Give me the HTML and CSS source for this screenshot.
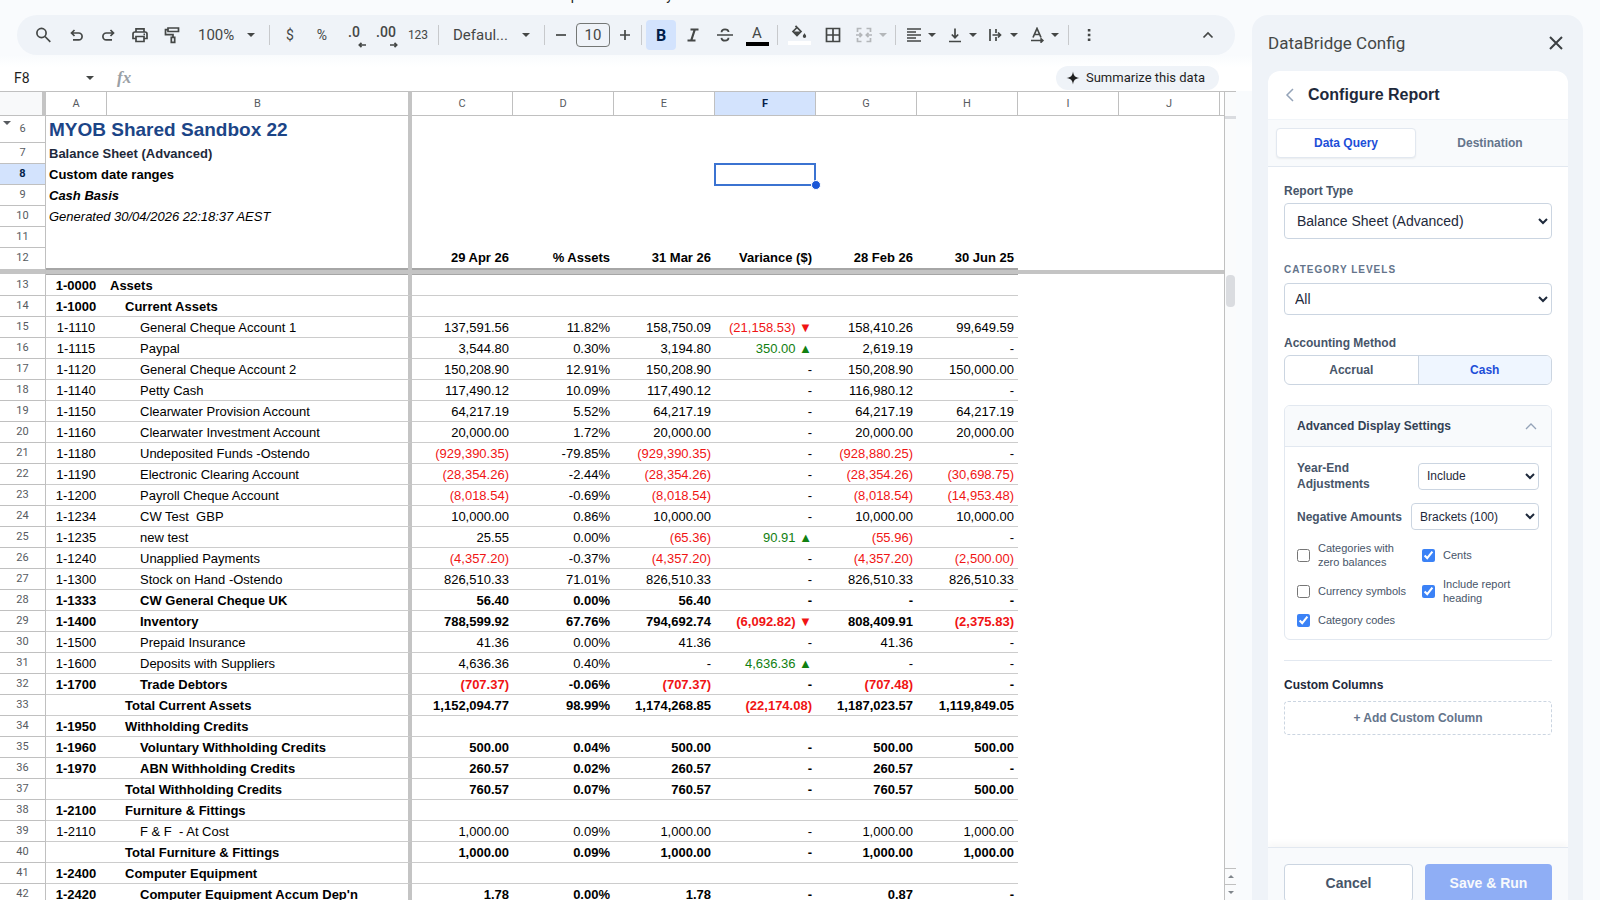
FILE: index.html
```html
<!DOCTYPE html>
<html lang="en">
<head>
    <meta charset="UTF-8">
    <meta name="viewport" content="width=device-width, initial-scale=1.0">
    <title>Balance Sheet - DataBridge</title>
    <link rel="stylesheet" href="styles.css">
</head>
<body>
<div class="main">
    <!-- Menu -->
    <nav class="menu">
        <span>File</span><span>Edit</span><span>View</span><span>Insert</span><span>Format</span><span>Data</span><span>Tools</span><span>Gemini</span><span>Extensions</span><span>Help</span><span>Accessibility</span>
    </nav>

    <!-- Toolbar -->
    <div class="toolbar">
        <button class="tool" aria-label="Search"><svg width="18" height="18" viewBox="0 0 18 18"><circle cx="6.500" cy="7" r="4.600"/><path d="M10 10.500l5.300 5.300"/></svg></button>
        <button class="tool" aria-label="Undo"><svg width="18" height="18" viewBox="0 0 18 18"><path d="M7.500 4L4.500 7l3 3M4.500 7h7.200a3.400 3.400 0 0 1 0 6.800H6"/></svg></button>
        <button class="tool" aria-label="Redo"><svg width="18" height="18" viewBox="0 0 18 18"><path d="M11.500 4l3 3-3 3M14.500 7H7.300a3.400 3.400 0 0 0 0 6.800H13"/></svg></button>
        <button class="tool" aria-label="Print"><svg width="18" height="18" viewBox="0 0 18 18"><path d="M5 6V2.800h8V6M5 12.500H2V8a2 2 0 0 1 2-2h10a2 2 0 0 1 2 2v4.500h-3M5 10.500h8v5H5z"/><path d="M12.500 8.300h1.500"/></svg></button>
        <button class="tool" aria-label="Paint format"><svg width="18" height="18" viewBox="0 0 18 18"><path d="M5 2h10.500v3.500H5zM5 3.700H2.500v5H10v2.500M8.300 11.300h3.400v5H8.300z"/></svg></button>
        <button class="tool-text zoom">100%<i class="caret"></i></button>
        <span class="sep"></span>
        <button class="tool">$</button>
        <button class="tool">%</button>
        <button class="tool decimal">.0<svg width="8" height="6" viewBox="0 0 8 6"><path d="M8 3H1.500M3.500 .8L1.300 3l2.200 2.200"/></svg></button>
        <button class="tool decimal">.00<svg width="8" height="6" viewBox="0 0 8 6"><path d="M0 3h6.500M4.500 .8L6.700 3 4.500 5.200"/></svg></button>
        <button class="tool small">123</button>
        <span class="sep"></span>
        <button class="tool-text font">Defaul...<i class="caret"></i></button>
        <span class="sep"></span>
        <button class="tool narrow" aria-label="Decrease font size"><svg width="12" height="12" viewBox="0 0 12 12"><path d="M1 6h10"/></svg></button>
        <input class="font-size" type="text" value="10" aria-label="Font size">
        <button class="tool narrow" aria-label="Increase font size"><svg width="12" height="12" viewBox="0 0 12 12"><path d="M1 6h10M6 1v10"/></svg></button>
        <span class="sep"></span>
        <button class="tool bold">B</button>
        <button class="tool" aria-label="Italic"><svg width="18" height="18" viewBox="0 0 18 18"><path d="M6.500 3.500h8M3.500 14.500h8M10.800 3.500L7.200 14.500" stroke-width="2.200"/></svg></button>
        <button class="tool" aria-label="Strikethrough"><svg width="18" height="18" viewBox="0 0 18 18"><path d="M1 9h16M12.600 6C12.400 4.200 11 3.300 9 3.300S5.600 4.200 5.500 6.200M5.400 11.800c.2 1.900 1.600 2.900 3.600 2.900s3.500-1 3.500-2.900"/></svg></button>
        <button class="tool color-tool">A<i class="swatch black"></i></button>
        <span class="sep"></span>
        <button class="tool wide color-tool" aria-label="Fill color"><svg width="18" height="15" viewBox="0 0 18 15"><path d="M5.500 .8L11 6.500 7 10.500 3 6.500l4-4"/><path class="solid" d="M3 6.500h8L7 10.500zM14.500 8.300s1.700 2 1.700 3a1.700 1.700 0 0 1-3.400 0c0-1 1.700-3 1.700-3z"/></svg><i class="swatch white"></i></button>
        <button class="tool wide" aria-label="Borders"><svg width="18" height="18" viewBox="0 0 18 18"><path d="M2.500 2.500h13v13h-13zM9 2.500v13M2.500 9h13"/></svg></button>
        <button class="tool drop merge" aria-label="Merge cells"><svg width="18" height="18" viewBox="0 0 18 18"><path d="M6.500 2.500h-4v3.500M11.500 2.500h4v3.500M6.500 15.500h-4V12M11.500 15.500h4V12M1 9h5.500M4.500 6.800L6.700 9l-2.200 2.200M17 9h-5.500M13.500 6.800L11.300 9l2.200 2.200"/></svg><i class="caret"></i></button>
        <span class="sep"></span>
        <button class="tool drop" aria-label="Horizontal align"><svg width="16" height="16" viewBox="0 0 16 16"><path d="M1 2h14M1 5h9M1 8h14M1 11h9M1 14h14"/></svg><i class="caret"></i></button>
        <button class="tool drop" aria-label="Vertical align"><svg width="16" height="16" viewBox="0 0 16 16"><path d="M2 14.500h12M8 1.500v9M4.800 7.500L8 10.700l3.200-3.200"/></svg><i class="caret"></i></button>
        <button class="tool drop" aria-label="Text wrapping"><svg width="16" height="16" viewBox="0 0 16 16"><path d="M2 2v12M8 2v4M8 10v4M4.500 8h8M10 5.500L12.500 8 10 10.500"/></svg><i class="caret"></i></button>
        <button class="tool drop" aria-label="Text rotation"><svg width="16" height="16" viewBox="0 0 16 16"><path d="M4 10.500L8 1.500l4 9M5.500 7.500h5M2 13.500h12M11.500 11.300l2.300 2.200-2.300 2.200"/></svg><i class="caret"></i></button>
        <span class="sep"></span>
        <button class="tool" aria-label="More"><svg width="18" height="18" viewBox="0 0 18 18"><path class="solid" d="M7.800 3h2.600v2.600H7.800zM7.800 7.700h2.600v2.600H7.800zM7.800 12.400h2.600V15H7.800z"/></svg></button>
        <button class="tool collapse" aria-label="Hide the menus"><svg width="14" height="14" viewBox="0 0 14 14"><path d="M2.500 9.500L7 5l4.500 4.500"/></svg></button>
    </div>

    <!-- Formula bar -->
    <div class="formula-bar">
        <input class="name-box" type="text" value="F8" aria-label="Name box">
        <i class="caret"></i>
        <span class="fx">fx</span>
        <button class="summarize"><svg width="14" height="14" viewBox="0 0 14 14"><path d="M7 0.500C7.600 4.900 9.100 6.400 13.500 7 9.100 7.600 7.600 9.100 7 13.500 6.400 9.100 4.900 7.600.5 7 4.900 6.400 6.400 4.900 7 .5z"/></svg>Summarize this data</button>
    </div>

    <!-- Grid -->
    <div class="grid">
        <div class="sheet-wrap">
        <table class="sheet">
            <colgroup>
                <col class="c-head"><col class="c-a"><col class="c-b">
                <col class="c-n"><col class="c-n"><col class="c-n"><col class="c-n"><col class="c-n"><col class="c-n"><col class="c-n"><col class="c-n"><col>
            </colgroup>
            <thead>
                <tr><th class="corner"></th><th>A</th><th>B</th><th>C</th><th>D</th><th>E</th><th class="active">F</th><th>G</th><th>H</th><th>I</th><th>J</th><th></th></tr>
            </thead>
            <tbody class="frozen">
                <tr class="tall"><th><i class="caret group"></i>6</th><td class="title" colspan="2">MYOB Shared Sandbox 22</td><td></td><td></td><td></td><td></td><td></td><td></td></tr>
                <tr><th>7</th><td class="sub" colspan="2">Balance Sheet (Advanced)</td><td></td><td></td><td></td><td></td><td></td><td></td></tr>
                <tr><th class="active">8</th><td class="strong" colspan="2">Custom date ranges</td><td></td><td></td><td></td><td class="selected"><span class="cursor"></span></td><td></td><td></td></tr>
                <tr><th>9</th><td class="strong italic" colspan="2">Cash Basis</td><td></td><td></td><td></td><td></td><td></td><td></td></tr>
                <tr><th>10</th><td class="italic" colspan="2">Generated 30/04/2026 22:18:37 AEST</td><td></td><td></td><td></td><td></td><td></td><td></td></tr>
                <tr><th>11</th><td colspan="2"></td><td></td><td></td><td></td><td></td><td></td><td></td></tr>
                <tr class="headings"><th>12</th><td colspan="2"></td><td>29 Apr 26</td><td>% Assets</td><td>31 Mar 26</td><td>Variance ($)</td><td>28 Feb 26</td><td>30 Jun 25</td></tr>
                <tr class="freeze"><th></th><td class="edge" colspan="2"></td><td class="edge" colspan="6"></td><td colspan="3"></td></tr>
            </tbody>
            <tbody class="data">
                <tr class="b"><th>13</th><td>1-0000</td><td>Assets</td><td></td><td></td><td></td><td></td><td></td><td></td></tr>
                <tr class="b"><th>14</th><td>1-1000</td><td class="in1">Current Assets</td><td></td><td></td><td></td><td></td><td></td><td></td></tr>
                <tr><th>15</th><td>1-1110</td><td class="in2">General Cheque Account 1</td><td>137,591.56</td><td>11.82%</td><td>158,750.09</td><td class="neg">(21,158.53) ▼</td><td>158,410.26</td><td>99,649.59</td></tr>
                <tr><th>16</th><td>1-1115</td><td class="in2">Paypal</td><td>3,544.80</td><td>0.30%</td><td>3,194.80</td><td class="pos">350.00 ▲</td><td>2,619.19</td><td>-</td></tr>
                <tr><th>17</th><td>1-1120</td><td class="in2">General Cheque Account 2</td><td>150,208.90</td><td>12.91%</td><td>150,208.90</td><td>-</td><td>150,208.90</td><td>150,000.00</td></tr>
                <tr><th>18</th><td>1-1140</td><td class="in2">Petty Cash</td><td>117,490.12</td><td>10.09%</td><td>117,490.12</td><td>-</td><td>116,980.12</td><td>-</td></tr>
                <tr><th>19</th><td>1-1150</td><td class="in2">Clearwater Provision Account</td><td>64,217.19</td><td>5.52%</td><td>64,217.19</td><td>-</td><td>64,217.19</td><td>64,217.19</td></tr>
                <tr><th>20</th><td>1-1160</td><td class="in2">Clearwater Investment Account</td><td>20,000.00</td><td>1.72%</td><td>20,000.00</td><td>-</td><td>20,000.00</td><td>20,000.00</td></tr>
                <tr><th>21</th><td>1-1180</td><td class="in2">Undeposited Funds -Ostendo</td><td class="neg">(929,390.35)</td><td>-79.85%</td><td class="neg">(929,390.35)</td><td>-</td><td class="neg">(928,880.25)</td><td>-</td></tr>
                <tr><th>22</th><td>1-1190</td><td class="in2">Electronic Clearing Account</td><td class="neg">(28,354.26)</td><td>-2.44%</td><td class="neg">(28,354.26)</td><td>-</td><td class="neg">(28,354.26)</td><td class="neg">(30,698.75)</td></tr>
                <tr><th>23</th><td>1-1200</td><td class="in2">Payroll Cheque Account</td><td class="neg">(8,018.54)</td><td>-0.69%</td><td class="neg">(8,018.54)</td><td>-</td><td class="neg">(8,018.54)</td><td class="neg">(14,953.48)</td></tr>
                <tr><th>24</th><td>1-1234</td><td class="in2">CW Test&nbsp; GBP</td><td>10,000.00</td><td>0.86%</td><td>10,000.00</td><td>-</td><td>10,000.00</td><td>10,000.00</td></tr>
                <tr><th>25</th><td>1-1235</td><td class="in2">new test</td><td>25.55</td><td>0.00%</td><td class="neg">(65.36)</td><td class="pos">90.91 ▲</td><td class="neg">(55.96)</td><td>-</td></tr>
                <tr><th>26</th><td>1-1240</td><td class="in2">Unapplied Payments</td><td class="neg">(4,357.20)</td><td>-0.37%</td><td class="neg">(4,357.20)</td><td>-</td><td class="neg">(4,357.20)</td><td class="neg">(2,500.00)</td></tr>
                <tr><th>27</th><td>1-1300</td><td class="in2">Stock on Hand -Ostendo</td><td>826,510.33</td><td>71.01%</td><td>826,510.33</td><td>-</td><td>826,510.33</td><td>826,510.33</td></tr>
                <tr class="b"><th>28</th><td>1-1333</td><td class="in2">CW General Cheque UK</td><td>56.40</td><td>0.00%</td><td>56.40</td><td>-</td><td>-</td><td>-</td></tr>
                <tr class="b"><th>29</th><td>1-1400</td><td class="in2">Inventory</td><td>788,599.92</td><td>67.76%</td><td>794,692.74</td><td class="neg">(6,092.82) ▼</td><td>808,409.91</td><td class="neg">(2,375.83)</td></tr>
                <tr><th>30</th><td>1-1500</td><td class="in2">Prepaid Insurance</td><td>41.36</td><td>0.00%</td><td>41.36</td><td>-</td><td>41.36</td><td>-</td></tr>
                <tr><th>31</th><td>1-1600</td><td class="in2">Deposits with Suppliers</td><td>4,636.36</td><td>0.40%</td><td>-</td><td class="pos">4,636.36 ▲</td><td>-</td><td>-</td></tr>
                <tr class="b"><th>32</th><td>1-1700</td><td class="in2">Trade Debtors</td><td class="neg">(707.37)</td><td>-0.06%</td><td class="neg">(707.37)</td><td>-</td><td class="neg">(707.48)</td><td>-</td></tr>
                <tr class="b"><th>33</th><td></td><td class="in1">Total Current Assets</td><td>1,152,094.77</td><td>98.99%</td><td>1,174,268.85</td><td class="neg">(22,174.08)</td><td>1,187,023.57</td><td>1,119,849.05</td></tr>
                <tr class="b"><th>34</th><td>1-1950</td><td class="in1">Withholding Credits</td><td></td><td></td><td></td><td></td><td></td><td></td></tr>
                <tr class="b"><th>35</th><td>1-1960</td><td class="in2">Voluntary Withholding Credits</td><td>500.00</td><td>0.04%</td><td>500.00</td><td>-</td><td>500.00</td><td>500.00</td></tr>
                <tr class="b"><th>36</th><td>1-1970</td><td class="in2">ABN Withholding Credits</td><td>260.57</td><td>0.02%</td><td>260.57</td><td>-</td><td>260.57</td><td>-</td></tr>
                <tr class="b"><th>37</th><td></td><td class="in1">Total Withholding Credits</td><td>760.57</td><td>0.07%</td><td>760.57</td><td>-</td><td>760.57</td><td>500.00</td></tr>
                <tr class="b"><th>38</th><td>1-2100</td><td class="in1">Furniture &amp; Fittings</td><td></td><td></td><td></td><td></td><td></td><td></td></tr>
                <tr><th>39</th><td>1-2110</td><td class="in2">F &amp; F&nbsp; - At Cost</td><td>1,000.00</td><td>0.09%</td><td>1,000.00</td><td>-</td><td>1,000.00</td><td>1,000.00</td></tr>
                <tr class="b"><th>40</th><td></td><td class="in1">Total Furniture &amp; Fittings</td><td>1,000.00</td><td>0.09%</td><td>1,000.00</td><td>-</td><td>1,000.00</td><td>1,000.00</td></tr>
                <tr class="b"><th>41</th><td>1-2400</td><td class="in1">Computer Equipment</td><td></td><td></td><td></td><td></td><td></td><td></td></tr>
                <tr class="b"><th>42</th><td>1-2420</td><td class="in2">Computer Equipment Accum Dep'n</td><td>1.78</td><td>0.00%</td><td>1.78</td><td>-</td><td>0.87</td><td>-</td></tr>
            </tbody>
        </table>
        </div>
        <div class="scrollbar">
            <div class="scroll-head"></div>
            <div class="thumb"></div>
            <button class="arrow" aria-label="Scroll up"><i class="caret up"></i></button>
            <button class="arrow" aria-label="Scroll down"><i class="caret"></i></button>
        </div>
    </div>
</div>

<!-- Add-on side panel -->
<aside class="panel">
    <div class="panel-header">
        <span>DataBridge Config</span>
        <button class="close" aria-label="Close"><svg width="16" height="16" viewBox="0 0 16 16"><path d="M2 2l12 12M14 2L2 14"/></svg></button>
    </div>
    <div class="card">
        <div class="card-title">
            <button class="back" aria-label="Back"><svg width="10" height="16" viewBox="0 0 10 16"><path d="M9 2L3 8l6 6"/></svg></button>
            <h1>Configure Report</h1>
        </div>
        <div class="tabs">
            <button class="tab active">Data Query</button>
            <button class="tab">Destination</button>
        </div>

        <div class="form">
            <label class="label" for="report-type">Report Type</label>
            <select class="select large" id="report-type"><option>Balance Sheet (Advanced)</option></select>

            <label class="label caps" for="levels">CATEGORY LEVELS</label>
            <select class="select" id="levels"><option>All</option></select>

            <div class="label method">Accounting Method</div>
            <div class="segment">
                <button>Accrual</button>
                <button class="active">Cash</button>
            </div>

            <!-- Advanced settings -->
            <div class="advanced">
                <button class="advanced-head">Advanced Display Settings<svg width="12" height="8" viewBox="0 0 12 8"><path d="M1 7l5-5 5 5"/></svg></button>
                <div class="advanced-body">
                    <div class="setting">
                        <label for="year-end">Year-End Adjustments</label>
                        <select class="mini year" id="year-end"><option>Include</option></select>
                    </div>
                    <div class="setting">
                        <label for="negative">Negative Amounts</label>
                        <select class="mini" id="negative"><option>Brackets (100)</option></select>
                    </div>
                    <div class="checks">
                        <label><input type="checkbox">Categories with zero balances</label>
                        <label><input type="checkbox" checked>Cents</label>
                        <label><input type="checkbox">Currency symbols</label>
                        <label><input type="checkbox" checked>Include report heading</label>
                        <label><input type="checkbox" checked>Category codes</label>
                    </div>
                </div>
            </div>

            <div class="custom">
                <h2>Custom Columns</h2>
                <button class="add">+ Add Custom Column</button>
            </div>
        </div>

        <div class="footer">
            <button class="cancel">Cancel</button>
            <button class="save">Save &amp; Run</button>
        </div>
    </div>
</aside>
</body>
</html>
```
FILE: styles.css
```css
* { margin: 0; padding: 0; box-sizing: border-box; }
body { height: 100vh; display: flex; overflow: hidden; background: #f9fbfd; color: #000; font-family: Roboto, Arial, sans-serif; }
button { background: none; border: none; font-family: inherit; cursor: pointer; }
svg { fill: none; stroke: currentColor; stroke-width: 1.7; flex: none; }
svg .solid { fill: currentColor; stroke: none; }

.main { flex: 1; min-width: 0; display: flex; flex-direction: column; }

/* Menu and toolbar */
.menu { height: 3px; margin-bottom: 12px; padding-left: 66px; display: flex; align-items: flex-end; overflow: hidden; font-size: 14px; line-height: 16px; color: #1f1f1f; }
.menu span { padding: 0 8px; }
.toolbar { height: 40px; margin: 0 17px; padding: 0 11px; display: flex; align-items: center; background: #eff3f8; border-radius: 20px; color: #444746; }
.tool { width: 32px; height: 30px; display: flex; align-items: center; justify-content: center; flex: none; color: #444746; font-size: 14px; border-radius: 4px; }
.tool.small { font-size: 12px; }
.tool.narrow { width: 24px; }
.tool.wide { width: 34px; }
.tool.bold { width: 30px; margin-right: 1px; background: #d3e3fd; color: #041e49; font-size: 16px; font-weight: bold; }
.tool.drop { width: 41px; gap: 6px; }
.tool.merge { color: #b4b7ba; }
.decimal { position: relative; align-items: flex-start; font-size: 14px; font-weight: 500; line-height: 24px; }
.decimal svg { position: absolute; right: 4px; bottom: 2px; }
.color-tool { flex-direction: column; font-size: 15px; line-height: 16px; gap: 1px; }
.swatch { width: 23px; height: 4px; }
.black { background: #000; }
.white { background: #fff; }
.tool-text { height: 30px; padding: 0 10px; display: flex; align-items: center; justify-content: space-between; flex: none; font-size: 15px; color: #444746; }
.zoom { width: 77px; }
.font { width: 97px; }
.sep { width: 1px; height: 20px; margin: 0 4px; background: #c7c9cc; flex: none; }
.font-size { width: 34px; height: 24px; margin: 0 3px; border: 1px solid #747775; border-radius: 4px; background: transparent; text-align: center; font: 15px Roboto, Arial, sans-serif; color: #444746; }
.collapse { margin-left: auto; }
.caret { width: 0; height: 0; border: 4px solid transparent; border-top-color: currentColor; border-bottom: none; flex: none; }
.caret.up { transform: rotate(180deg); }

/* Formula bar */
.formula-bar { height: 36px; padding: 9px 17px 0 14px; display: flex; align-items: center; background: linear-gradient(#f9fbfd, #fff 12px); color: #444746; }
.name-box { width: 72px; border: none; background: transparent; font: 14px Roboto, Arial, sans-serif; color: #1f1f1f; }
.fx { margin-left: 23px; font-family: "Liberation Serif", serif; font-style: italic; font-weight: bold; font-size: 17px; color: #9aa0a6; }
.summarize { height: 24px; margin-left: auto; margin-right: 16px; padding: 0 14px 0 10px; display: flex; align-items: center; gap: 6px; background: #eff3f8; border-radius: 12px; font-size: 13px; color: #1f1f1f; }
.summarize svg { fill: #1f1f1f; stroke: none; }

/* Grid */
.grid { flex: 1; min-height: 0; margin-right: 16px; display: flex; }
.sheet-wrap { flex: 1; min-width: 0; overflow: hidden; background: #fff; border-right: 1px solid #c0c0c0; }
.sheet { width: 100%; table-layout: fixed; border-spacing: 0; font-family: "Liberation Sans", Arial, sans-serif; font-size: 13px; line-height: 20px; }
.c-head { width: 46px; }
.c-a { width: 61px; }
.c-b { width: 305px; }
.c-n { width: 101px; }
.sheet th { border-right: 1px solid #c0c0c0; border-bottom: 1px solid #c0c0c0; font-family: Roboto, Arial, sans-serif; font-size: 11px; font-weight: normal; color: #575b5f; }
.sheet thead th { height: 25px; line-height: 20px; border-top: 1px solid #c0c0c0; }
.sheet thead th:nth-child(3), .sheet thead .corner { border-right: 4px solid #c4c4c4; }
.sheet thead .corner { background: #f8f9fa; }
.sheet thead th:last-child { border-right: none; }
.sheet th.active { background: #d3e3fd; color: #041e49; font-weight: bold; }
.sheet tbody th { position: relative; height: 21px; line-height: 19px; vertical-align: top; }
.sheet td { height: 21px; padding: 0 4px 0 3px; white-space: nowrap; text-align: right; vertical-align: bottom; }
.frozen td:nth-child(2) { text-align: left; border-right: 4px solid #c4c4c4; }
.sheet .tall th { height: 27px; line-height: 26px; }
.group { position: absolute; left: 3px; top: 5px; }
.title { font-size: 19px; line-height: 26px; font-weight: bold; color: #1c4587; }
.sub { font-weight: bold; color: #1e293b; }
.strong { font-weight: bold; }
.italic { font-style: italic; }
.sheet .headings td, .sheet .headings th { height: 20px; font-weight: bold; line-height: 20px; }
.sheet .headings th { font-weight: normal; border-bottom: none; }
.selected { position: relative; }
.cursor { position: absolute; left: -1px; top: -1px; right: 0; bottom: -1px; border: 2px solid #3b73d1; }
.cursor::after { content: ""; position: absolute; right: -7px; bottom: -6px; width: 8px; height: 8px; border: 1px solid #fff; border-radius: 50%; background: #1a56d6; box-sizing: content-box; }
.sheet .freeze th, .sheet .freeze td { height: 7px; padding: 0; line-height: 0; background: linear-gradient(transparent 2px, #c4c4c4 2px, #c4c4c4 6px, transparent 6px); }
.sheet .freeze th { border-bottom: none; background: linear-gradient(transparent 1px, #c4c4c4 1px, #c4c4c4 6px, transparent 6px); }
.sheet .freeze .edge { background: linear-gradient(#a6a6a6 2px, #c4c4c4 2px, #c4c4c4 6px, #a6a6a6 6px); }
.data td { line-height: 18px; border-bottom: 1px solid #ccc; }
.data td:nth-child(2) { text-align: center; }
.data td:nth-child(3) { text-align: left; border-right: 4px solid #c4c4c4; }
.data .in1 { padding-left: 18px; }
.data .in2 { padding-left: 33px; }
.b td { font-weight: bold; }
.data .neg { color: #f01414; }
.data .pos { color: #118011; }

.scrollbar { width: 11px; display: flex; flex-direction: column; background: #fafbfc; color: #80868b; }
.scroll-head { height: 28px; border-top: 1px solid #c0c0c0; border-bottom: 3px solid #dadce0; }
.thumb { width: 9px; height: 32px; margin: 156px 0 auto 1px; border-radius: 4px; background: #dadce0; }
.arrow { height: 16px; border-top: 1px solid #c0c0c0; display: flex; align-items: center; justify-content: center; color: #80868b; }
.arrow .caret { border-width: 3px; border-bottom: none; }

/* Side panel */
.panel { width: 331px; margin: 15px 17px 0 0; padding: 0 15px 0 16px; display: flex; flex-direction: column; background: #eff3f8; border-radius: 16px 16px 0 0; font-family: "Liberation Sans", Arial, sans-serif; }
.panel-header { height: 56px; padding-right: 4px; display: flex; align-items: center; justify-content: space-between; font-family: Roboto, Arial, sans-serif; font-size: 17px; color: #444746; }
.close { width: 16px; height: 16px; color: #3c4043; }
.close svg { stroke-width: 2; }
.card { flex: 1; min-height: 0; display: flex; flex-direction: column; overflow: hidden; background: #fff; border-radius: 12px 12px 0 0; }
.card-title { height: 48px; padding: 0 16px; display: flex; align-items: center; gap: 14px; }
.back { width: 10px; height: 16px; color: #94a3b8; }
.back svg { stroke-width: 1.5; }
.card-title h1 { font-size: 16px; color: #1e293b; }
.tabs { height: 48px; padding: 8px; display: flex; align-items: center; gap: 4px; background: #f8fafc; border-top: 1px solid #f1f5f9; border-bottom: 1px solid #e2e8f0; }
.tab { flex: 1; height: 30px; border: 1px solid transparent; border-radius: 4px; font-size: 12px; font-weight: bold; color: #64748b; }
.tab.active { background: #fff; border-color: #e2e8f0; box-shadow: 0 1px 2px rgba(0,0,0,0.06); color: #1d4ed8; }

.form { flex: 1; min-height: 0; padding: 16px; }
.label { display: block; margin-bottom: 4px; font-size: 12px; line-height: 16px; font-weight: bold; color: #475569; }
.select { width: 100%; height: 32px; padding-left: 6px; border: 1px solid #cbd5e1; border-radius: 4px; background: #fff; font: 14px "Liberation Sans", Arial, sans-serif; color: #1e293b; }
.select.large { height: 36px; padding-left: 8px; }
.caps { margin: 24px 0 6px; font-size: 10px; line-height: 14px; letter-spacing: 1px; color: #64748b; }
.method { margin-top: 20px; }
.segment { height: 30px; display: flex; border: 1px solid #cbd5e1; border-radius: 6px; overflow: hidden; }
.segment button { flex: 1; font-size: 12px; font-weight: bold; color: #475569; }
.segment .active { background: #eff6ff; border-left: 1px solid #cbd5e1; color: #1d4ed8; }

.advanced { margin-top: 20px; border: 1px solid #e2e8f0; border-radius: 6px; overflow: hidden; }
.advanced-head { width: 100%; height: 41px; padding: 0 14px 0 12px; display: flex; align-items: center; justify-content: space-between; background: #f8fafc; border-bottom: 1px solid #e2e8f0; font-size: 12px; font-weight: bold; color: #334155; }
.advanced-head svg { stroke: #94a3b8; stroke-width: 1.3; }
.advanced-body { padding: 13px 12px 12px; }
.setting { display: flex; align-items: center; justify-content: space-between; gap: 8px; margin-bottom: 11px; font-size: 12px; line-height: 16px; font-weight: bold; color: #475569; }
.mini { width: 128px; height: 27px; padding-left: 4px; flex: none; border: 1px solid #cbd5e1; border-radius: 4px; background: #fff; font: 12px "Liberation Sans", Arial, sans-serif; color: #1e293b; }
.mini.year { width: 121px; }
.checks { display: grid; grid-template-columns: 1fr 1fr; gap: 8px; font-size: 11px; line-height: 14px; color: #475569; }
.checks label { display: flex; align-items: center; gap: 8px; }
.checks input { width: 13px; height: 13px; flex: none; accent-color: #3b82f6; }

.custom { margin-top: 20px; padding-top: 16px; border-top: 1px solid #e2e8f0; }
.custom h2 { margin-bottom: 8px; font-size: 12px; line-height: 16px; color: #1e293b; }
.add { width: 100%; height: 34px; border: 1px dashed #cbd5e1; border-radius: 4px; font-size: 12px; font-weight: bold; color: #64748b; }

.footer { position: relative; height: 53px; padding: 16px 16px 0; display: flex; gap: 12px; background: #f8fafc; border-top: 1px solid #e2e8f0; box-shadow: 0 -4px 6px rgba(0,0,0,0.03); }
.footer button { flex: 1; height: 38px; border-radius: 4px; font-size: 14px; font-weight: bold; }
.cancel { background: #fff; border: 1px solid #cbd5e1; color: #475569; }
.footer .save { background: #8faef5; color: #f8fafc; }
```
